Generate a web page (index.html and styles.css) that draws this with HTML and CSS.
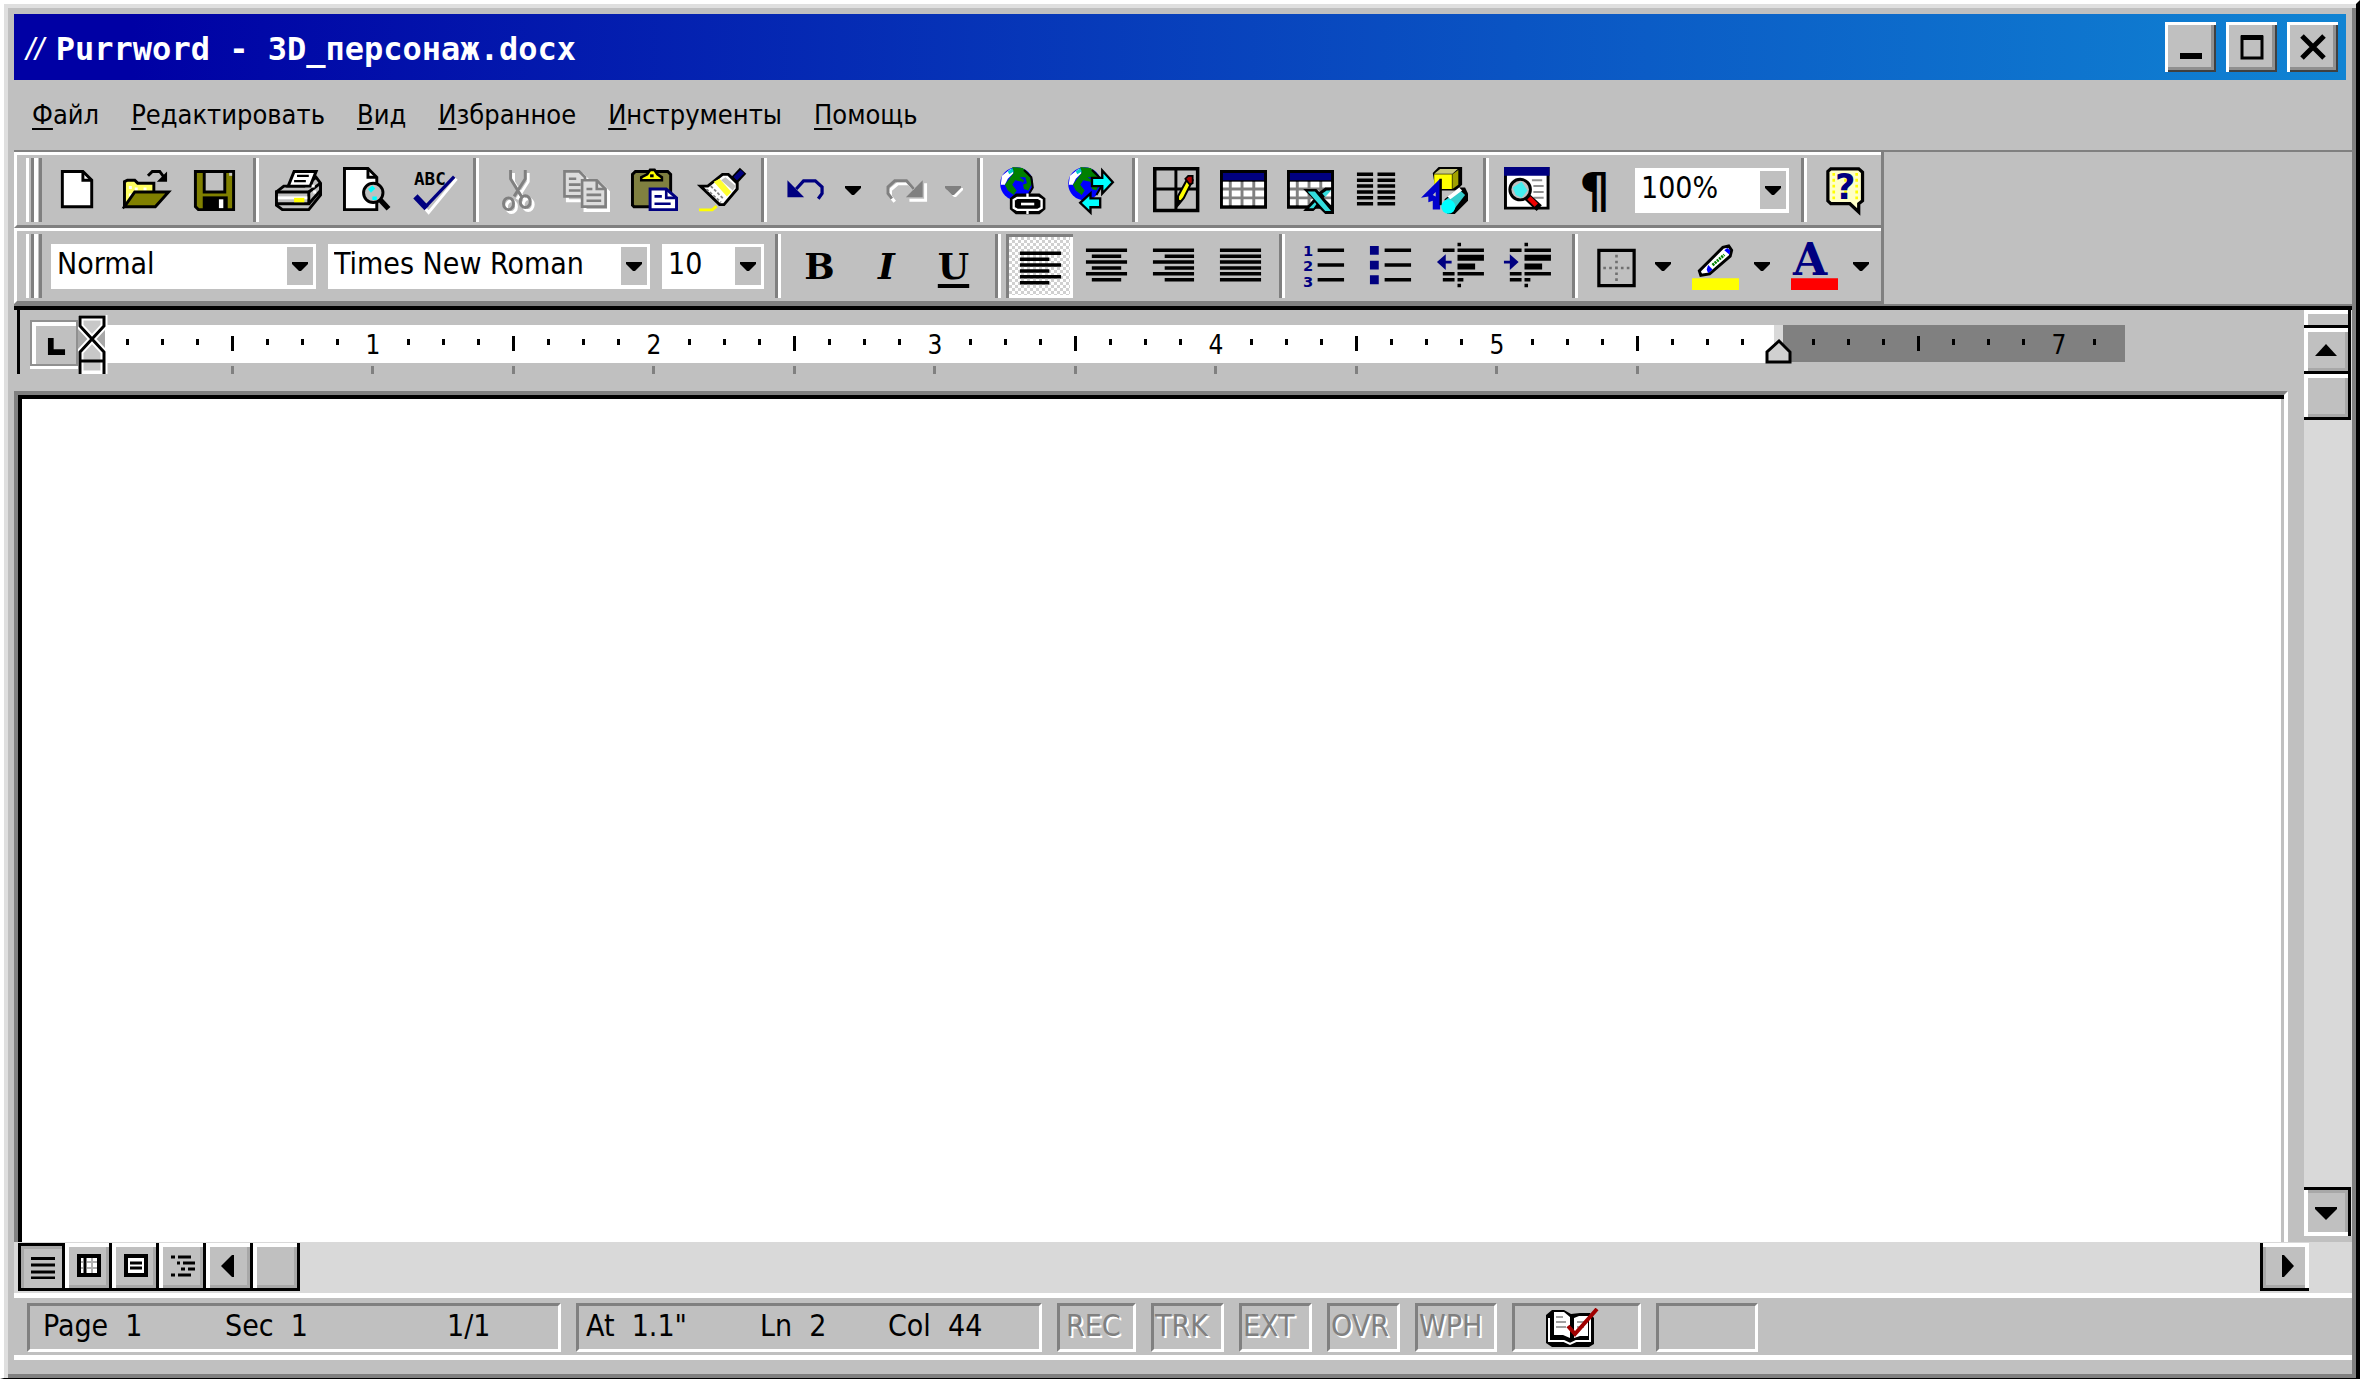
FILE: index.html
```html
<!DOCTYPE html>
<html lang="ru">
<head>
<meta charset="utf-8">
<meta name="viewport" content="width=device-width, initial-scale=1">
<title>Purrword - 3D_персонаж.docx</title>
<link rel="stylesheet" href="styles.css">
</head>
<body>
<svg class="defs" width="0" height="0" aria-hidden="true">
  <defs>
    <symbol id="caret" viewBox="0 0 16 9"><path d="M0 0H16V2L9 9H7L0 2Z"/></symbol>
    <symbol id="globe" viewBox="0 0 16 16">
      <circle cx="6" cy="5.7" r="5.6" fill="#00f"/>
      <path d="M1 3L4 .6L5 2L3 4L2 6L.6 6Z" fill="#fff"/>
      <path d="M4.500 0L8 .3L10 2L11.500 5L10 8L8.500 7.500L8 5L5.500 4.500L4.500 6L6 8L5 9.500L3 8L2 6L3.500 4L5 2Z" fill="#008000"/>
      <path d="M7 3.500L8.500 4.500L8 6L9.500 5.500L9 3.500Z" fill="#00f"/>
      <path d="M3 1.500L4.500 .3L5 1.500L3.500 2.500Z" fill="#0cc"/>
      <path d="M8.500 1L11 3.500L11.500 7L10 9.500" fill="none" stroke="#000" stroke-width=".7"/>
    </symbol>
    <symbol id="grid" viewBox="0 0 16 16">
      <path d="M0 1H16V14.200H0Z"/><path d="M1 2H15V4.500H1Z" fill="#000080"/>
      <path d="M1 5H15V13H1Z" fill="#808080"/>
      <path d="M1 5h2v2h-2zM4 5h3v2h-3zM8 5h3v2h-3zM12 5h3v2h-3zM1 8h2v2h-2zM4 8h3v2h-3zM8 8h3v2h-3zM12 8h3v2h-3zM1 11h2v2h-2zM4 11h3v2h-3zM8 11h3v2h-3zM12 11h3v2h-3z" fill="#fff"/>
    </symbol>
    <g id="inch">
      <path d="M34 24h3v6h-3zM69 24h3v6h-3zM104 24h3v6h-3zM139 21h3v15h-3zM174 24h3v6h-3zM209 24h3v6h-3zM244 24h3v6h-3z"/>
    </g>
  </defs>
</svg>

<div class="window">
  <header class="titlebar">
    <h1><i>//</i>Purrword - 3D_персонаж.docx</h1>
    <div class="captions">
      <button type="button" aria-label="Свернуть"><svg viewBox="0 0 26 26"><path d="M2 19H24V25H2Z"/></svg></button>
      <button type="button" aria-label="Развернуть"><svg viewBox="0 0 26 26"><path d="M3 3H23V24H3Z" fill="none" stroke="#000" stroke-width="3"/><path d="M2 1H24V6H2Z"/></svg></button>
      <button type="button" aria-label="Закрыть"><svg viewBox="0 0 26 26"><path d="M2 2L24 24M24 2L2 24" stroke="#000" stroke-width="5"/></svg></button>
    </div>
  </header>

  <nav class="menu">
    <a href="#file"><u>Ф</u>айл</a>
    <a href="#edit"><u>Р</u>едактировать</a>
    <a href="#view"><u>В</u>ид</a>
    <a href="#favorites"><u>И</u>збранное</a>
    <a href="#tools"><u>И</u>нструменты</a>
    <a href="#help"><u>П</u>омощь</a>
  </nav>

  <div class="dock">
    <div class="bars">
      <div class="bar" role="toolbar" aria-label="Standard">
        <span class="grip"></span>
        <div class="group">
          <button class="tool" type="button" aria-label="New"><svg viewBox="0 0 16 16"><path d="M2.500 1.500H9.500L12.500 4.500V13.500H2.500Z" fill="#fff" stroke="#000"/><path d="M9.500 1.500V4.500H12.500" fill="none" stroke="#000"/></svg></button>
          <button class="tool" type="button" aria-label="Open"><svg viewBox="0 0 16 16"><path d="M.5 13.500V5L1.500 4.500H4L5 5.500H10.500V9L6 10Z" fill="#ffff60" stroke="#000"/><path d="M2 6.500h1v1h-1zM4 7h1v1h-1zM2 9h1v1h-1zM7 7h1v1h-1z" fill="#fff"/><path d="M.5 13.500L4 8.500H15.500L11 13.500Z" fill="#808000" stroke="#000"/><path d="M8.500 3L10 1.500H12.500L14 3.500" fill="none" stroke="#000"/><path d="M11.500 5H15V1.500Z"/></svg></button>
          <button class="tool" type="button" aria-label="Save"><svg viewBox="0 0 16 16"><path d="M1.500 1.500H14.500V14.500H2.500L1.500 13.500Z" fill="#808000" stroke="#000"/><path d="M4.500 1.500H11.500V8.500H4.500Z" fill="#c0c0c0" stroke="#000"/><path d="M4 10H12.500V14.500H4Z"/><path d="M9.500 11H11V14H9.500Z" fill="#fff"/><path d="M13 2h1v1h-1z" fill="#ccc"/></svg></button>
        </div>
        <span class="sep"></span>
        <div class="group">
          <button class="tool" type="button" aria-label="Print"><svg viewBox="0 0 16 16"><path d="M.5 8.500L3 6.500H10L14 3.500L15.500 5.500V9.500L11.500 14.500H2.500L.5 13Z" fill="#c0c0c0" stroke="#000"/><path d="M6.500 1.500H14L12 6.500H4.500Z" fill="#fff" stroke="#000"/><path d="M7.500 3H11.500M6.500 4.800H10.500" stroke="#000" stroke-width=".8"/><path d="M.5 8.500H11.500V12.500H.5Z" fill="#c0c0c0" stroke="#000"/><path d="M1 10H11V11H1Z" fill="#fff"/><path d="M6.500 10.500H10V12H6.500Z" fill="#ff0"/><path d="M11.500 8.500L15.500 5.500M11.500 12.500L15.500 8" stroke="#000"/><path d="M13 8v1h1v-1zM12.500 6v1h1v-1z" fill="#fff"/></svg></button>
          <button class="tool" type="button" aria-label="Print preview"><svg viewBox="0 0 16 16"><path d="M.5 .5H8.500L11.500 3.500V14.500H.5Z" fill="#fff" stroke="#000"/><path d="M8.500 .5V3.500H11.500" fill="none" stroke="#000"/><circle cx="10.300" cy="8.800" r="3.300" fill="#c0c0c0" stroke="#000"/><path d="M8.500 7.500l1.500-1.200l1 1l-1.500 1.500zM10 10h1.500v1.200h-1.500z" fill="#0ff"/><path d="M12.800 11.300L15.500 14.200" stroke="#000" stroke-width="1.800"/></svg></button>
          <button class="tool" type="button" aria-label="Spelling"><svg viewBox="0 0 16 16"><text x="1" y="6" class="abc">ABC</text><path d="M2.500 11.500L6 15.500L15.500 4" fill="none" stroke="#fff"/><path d="M1.500 10L5.300 14" stroke="#000080" stroke-width="2"/><path d="M4.500 14L14.700 3.300" stroke="#000080" stroke-width="1.100"/></svg></button>
        </div>
        <span class="sep"></span>
        <div class="group">
          <button class="tool" type="button" aria-label="Cut" disabled><svg viewBox="0 0 16 16"><g fill="none" stroke="#fff" transform="translate(1 1)"><path d="M5.300 1V4L9 10M10.300 1V4L6.500 10"/><ellipse cx="4.600" cy="12.500" rx="1.700" ry="2"/><ellipse cx="10.300" cy="11.800" rx="1.700" ry="2"/></g><g fill="none" stroke="#808080"><path d="M5.300 1V4L9 10M10.300 1V4L6.500 10"/><ellipse cx="4.600" cy="12.500" rx="1.700" ry="2"/><ellipse cx="10.300" cy="11.800" rx="1.700" ry="2"/></g></svg></button>
          <button class="tool" type="button" aria-label="Copy" disabled><svg viewBox="0 0 16 16"><path d="M1.500 2.500H6.500L8.500 4.500V11.500H1.500ZM7.500 5.500H12.500L15.500 8.500V14.800H7.500Z" fill="none" stroke="#fff"/><path d="M.5 1.500H5.500L7.500 3.500V10H.5Z" fill="#ddd" stroke="#808080" stroke-width=".9"/><path d="M2 4H4.500M2 6H6M2 8H6" stroke="#808080" stroke-width=".9"/><path d="M6.500 4.500H11.500L14.500 7.500V13.500H6.500Z" fill="#ddd" stroke="#808080" stroke-width=".9"/><path d="M11.500 4.500V7.500H14.500M8 7.500H10M8 9.500H13M8 11.500H13" fill="none" stroke="#808080" stroke-width=".9"/></svg></button>
          <button class="tool" type="button" aria-label="Paste"><svg viewBox="0 0 16 16"><path d="M.5 2.500L1.500 1.500H12.500L13.500 2.500V13.500H1L.5 13Z" fill="#808040" stroke="#000"/><path d="M3.500 4.500V3.500L5.500 2.500L6.500 1H8L9 2.500L10.500 3.500V4.500Z" fill="#ff0" stroke="#000" stroke-width=".9"/><path d="M6.500 2.500h1.200v1h-1.200z"/><path d="M6.500 7.500H12L15.500 10.500V14.500H6.500Z" fill="#fff" stroke="#000080"/><path d="M12 7.500V10.500H15M8 10H10.500M8 12.500H13.500" fill="none" stroke="#000080" stroke-width=".9"/></svg></button>
          <button class="tool" type="button" aria-label="Format painter"><svg viewBox="0 0 16 16"><path d="M12 4.500L15 1.300" stroke="#000" stroke-width="3"/><path d="M12.300 4L14.800 1.500" stroke="#000080" stroke-width="1.700"/><path d="M.5 6.500H3L8 2.500H10L13 5.500V7.500L8.500 12.800H7Z" fill="#fff" stroke="#000"/><path d="M5 5L7 4L11 8.500L9.500 10Z" fill="#ffff30"/><path d="M9 3.500L12.500 6.500L11.500 8L7.500 4.500Z" fill="#c0c0c0"/><path d="M2.500 7.500L7.500 12M4 6.500L8.500 11" stroke="#808080" stroke-width=".6" stroke-dasharray="1 .6"/><path d="M0 14.600H4.500L6 13.300" stroke="#ff0" fill="none"/></svg></button>
        </div>
        <span class="sep"></span>
        <div class="group">
          <button class="tool" type="button" aria-label="Undo"><svg viewBox="0 0 16 16"><path d="M1.500 4.500V10.300H7.200Z" fill="#000080"/><path d="M4.500 7.500L7 4.700H11L13.300 6.800V9L12 10.800" fill="none" stroke="#000080" stroke-width="1.100"/></svg></button>
          <button class="drop" type="button" aria-label="Undo list"><svg><use href="#caret"/></svg></button>
          <button class="tool" type="button" aria-label="Redo" disabled><svg viewBox="0 0 16 16"><path d="M14.500 5.500V11.300H9" fill="none" stroke="#fff"/><path d="M11.300 8.300L8.800 5.700H5L2.500 7.800V10L4 11.800" fill="none" stroke="#fff" stroke-width="1.100"/><path d="M13.500 4.500V10.300H7.800Z" fill="#808080"/><path d="M10.500 7.500L8 4.700H4L1.700 6.800V9L3 10.800" fill="none" stroke="#808080"/></svg></button>
          <button class="drop off" type="button" aria-label="Redo list" disabled><svg><use href="#caret"/></svg></button>
        </div>
        <span class="sep"></span>
        <div class="group">
          <button class="tool" type="button" aria-label="Insert hyperlink"><svg viewBox="0 0 16 16"><use href="#globe"/><g fill="none"><path d="M4.500 11L6 9.800H13.500L15 11V14L13.500 15.300H6L4.500 14Z" stroke="#000" stroke-width="1.600"/><path d="M5 11.200L6.200 10.500H13.300L14.500 11.200V13.900L13.300 14.600H6.200L5 13.900Z" fill="#000" stroke="#fff" stroke-width=".8"/><path d="M7.500 12.600H12" stroke="#fff" stroke-width=".9"/><path d="M9.700 9V10.500M9.700 14.500V16" stroke="#fff" stroke-width=".8"/></g></svg></button>
          <button class="tool" type="button" aria-label="Web toolbar"><svg viewBox="0 0 16 16"><use href="#globe"/><path d="M8.500 3.700H12V1.200L15.600 5.200L12 9V6.500H8.500Z" fill="#0ff" stroke="#000" stroke-width=".8"/><path d="M11.300 10.700H8V9L4.500 12.200L8 15.500V13.700H11.300Z" fill="#0ff" stroke="#000" stroke-width=".8"/></svg></button>
        </div>
        <span class="sep wide"></span>
        <div class="group tight">
          <button class="tool" type="button" aria-label="Tables and borders"><svg viewBox="0 0 16 16"><path d="M.6 .6H15.200V14.800H.6Z" fill="#c0c0c0" stroke="#000" stroke-width="1.200"/><path d="M7.800 0V15M0 7.500H15" stroke="#000"/><path d="M8.500 13L8.500 10L12 3.500L13.500 4.500L10.500 10.500Z" fill="#ff0" stroke="#000" stroke-width=".7"/><path d="M11 4L12 3H13.500V5.500L12.500 6Z" fill="#a00" stroke="#000" stroke-width=".6"/><path d="M8.300 13.500V11L10 11.500Z"/></svg></button>
          <button class="tool" type="button" aria-label="Insert table"><svg viewBox="0 0 16 16"><use href="#grid"/></svg></button>
          <button class="tool" type="button" aria-label="Insert worksheet"><svg viewBox="0 0 16 16"><use href="#grid"/><path d="M5.500 7.500H10L11 8.500L13 7H15.500L12.500 10.500L16 14V16H13L10.500 13.500L9 15H5.500L9 11Z"/><path d="M7 8.300H9.500L15 15H13ZM12 9L13.500 8H15L13 10.200ZM7.500 14L9.500 12L10 12.700L9 14Z" fill="#3dd"/></svg></button>
          <button class="tool" type="button" aria-label="Columns"><svg viewBox="0 0 16 16"><path d="M1 2.500H6.500M8 2.500H14M1 4.500H6.500M8 4.500H14M1 6.500H6.500M8 6.500H14M1 8.500H6.500M8 8.500H14M1 10.500H6.500M8 10.500H14M1 12.500H6.500M8 12.500H14" stroke="#000" stroke-width="1.200"/></svg></button>
          <button class="tool" type="button" aria-label="Drawing"><svg viewBox="0 0 16 16"><path d="M4 2L6 0H14V6L12 8H5Z" fill="#000"/><path d="M4.500 2.500H10.500V7.500H4.500Z" fill="#ff0"/><path d="M4.500 2.300L6.500 .7H12.500L10.700 2.300Z" fill="#c8c880"/><path d="M10.700 2.500L12.700 1V6L10.700 7.500Z" fill="#a0a000"/><path d="M0 10.500L6.500 4V14.500H4V11.500L2.500 12V10Z" fill="#00c"/><path d="M6.700 4V13" stroke="#000" stroke-width=".8"/><path d="M4 9.500L5 8.500V10Z" fill="#c0c0c0"/><path d="M8 11L13 7H15L16 9V11.500L11.500 16H9Z" fill="#000"/><path d="M8 11.500L13 7.700L15 9.500L11.500 14Z" fill="#3cc"/><path d="M9 10L13 7L14 8L10 11Z" fill="#fff"/><circle cx="9.300" cy="13.500" r="2.400" fill="#0ff"/></svg></button>
        </div>
        <span class="sep"></span>
        <div class="group tight">
          <button class="tool" type="button" aria-label="Document map"><svg viewBox="0 0 16 16"><path d="M.5 .5H15V14H.5Z" fill="#fff" stroke="#000"/><path d="M0 0H15.500V3H0Z" fill="#000080"/><path d="M9.500 4.500H13M10 6.500H13.500M10 8.500H13.500M10 10.500H13.500" stroke="#909090" stroke-width=".7"/><circle cx="5.500" cy="7.700" r="3.500" fill="#c0c0c0" stroke="#000"/><path d="M3 7L6 5L8 8L6 10.500L4 9.500Z" fill="#4ee"/><path d="M8 10.300L12 14" stroke="#000" stroke-width="2.600"/><path d="M8.500 10.500L11 13" stroke="#e00" stroke-width="1.600"/></svg></button>
          <button class="tool pilcrow" type="button" aria-label="Show formatting">¶</button>
        </div>
        <span class="combo zoom"><select aria-label="Zoom"><option>100%</option></select><span class="knob"><svg><use href="#caret"/></svg></span></span>
        <span class="sep"></span>
        <div class="group tight">
          <button class="tool" type="button" aria-label="Help"><svg viewBox="0 0 16 16"><path d="M2 1.500L3 .6H12.500L13.800 1.800V11.500L12.500 12.500V15.300L9.500 12.500H3L2 11.500Z" fill="#ffffc8" stroke="#000" stroke-width="1.100"/><path d="M4 2v9.500M11.800 2v9.500M8 2v9.500" stroke="#ff0" stroke-dasharray="1 1" stroke-width=".9"/><text x="7.900" y="11" class="query">?</text></svg></button>
        </div>
      </div>

      <div class="bar" role="toolbar" aria-label="Formatting">
        <span class="grip"></span>
        <div class="combos">
          <span class="combo style"><select aria-label="Style"><option>Normal</option></select><span class="knob"><svg><use href="#caret"/></svg></span></span>
          <span class="combo font"><select aria-label="Font"><option>Times New Roman</option></select><span class="knob"><svg><use href="#caret"/></svg></span></span>
          <span class="combo size"><select aria-label="Font size"><option>10</option></select><span class="knob"><svg><use href="#caret"/></svg></span></span>
        </div>
        <span class="sep"></span>
        <div class="group tight">
          <button class="tool letter" type="button" aria-label="Bold">B</button>
          <button class="tool letter italic" type="button" aria-label="Italic">I</button>
          <button class="tool letter under" type="button" aria-label="Underline">U</button>
        </div>
        <span class="sep wide"></span>
        <div class="group tight">
          <button class="tool pressed" type="button" aria-label="Align left" aria-pressed="true"><svg viewBox="0 0 16 16"><path d="M1 2.500H15M1 4.500H11M1 6.500H15M1 8.500H11M1 10.500H15M1 12.500H11" stroke="#000" stroke-width="1.200"/></svg></button>
          <button class="tool" type="button" aria-label="Center"><svg viewBox="0 0 16 16"><path d="M1 2.500H15M3 4.500H13M1 6.500H15M3 8.500H13M1 10.500H15M3 12.500H13" stroke="#000" stroke-width="1.200"/></svg></button>
          <button class="tool" type="button" aria-label="Align right"><svg viewBox="0 0 16 16"><path d="M1 2.500H15M5 4.500H15M1 6.500H15M5 8.500H15M1 10.500H15M5 12.500H15" stroke="#000" stroke-width="1.200"/></svg></button>
          <button class="tool" type="button" aria-label="Justify"><svg viewBox="0 0 16 16"><path d="M1 2.500H15M1 4.500H15M1 6.500H15M1 8.500H15M1 10.500H15M1 12.500H15" stroke="#000" stroke-width="1.200"/></svg></button>
        </div>
        <span class="sep"></span>
        <div class="group tight">
          <button class="tool" type="button" aria-label="Numbering"><svg viewBox="0 0 16 16"><g class="nums"><text x="1" y="4.500">1</text><text x="1" y="9.700">2</text><text x="1" y="15">3</text></g><path d="M6 2.500H15M6 7.500H15M6 12.500H15" stroke="#000" stroke-width="1.200"/></svg></button>
          <button class="tool" type="button" aria-label="Bullets"><svg viewBox="0 0 16 16"><path d="M1 1h3v3h-3zM1 6h3v3h-3zM1 11h3v3h-3z" fill="#000080"/><path d="M6 2.500H15M6 7.500H15M6 12.500H15" stroke="#000" stroke-width="1.200"/></svg></button>
          <button class="tool" type="button" aria-label="Decrease indent"><svg viewBox="0 0 16 16"><g transform="translate(1 0)"><path d="M0 6.500L3 3.800V6H5V7H3V9.200Z" fill="#000080"/><path d="M2 2.500H6M7 2.500H16M2 10.500H6M7 10.500H16M2 12.500H6M7 12.500H9M7 .5H8.200M7 14.500H8.200" stroke="#000" stroke-width="1.200"/><path d="M7 5H16M7 8H13" stroke="#000" stroke-width="2"/></g></svg></button>
          <button class="tool" type="button" aria-label="Increase indent"><svg viewBox="0 0 16 16"><g transform="translate(1 0)"><path d="M5 6.500L2 3.800V6H0V7H2V9.200Z" fill="#000080"/><path d="M2 2.500H6M7 2.500H16M2 10.500H6M7 10.500H16M2 12.500H6M7 12.500H9M7 .5H8.200M7 14.500H8.200" stroke="#000" stroke-width="1.200"/><path d="M7 5H16M7 8H13" stroke="#000" stroke-width="2"/></g></svg></button>
        </div>
        <span class="sep roomy"></span>
        <div class="group tight">
          <button class="tool" type="button" aria-label="Borders"><svg viewBox="0 0 16 16"><path d="M2 2.500H14V14.500H2Z" fill="none" stroke="#000" stroke-width="1.100"/><path d="M8 4V14M3.500 8.500H13.500" stroke="#707070" stroke-width=".9" stroke-dasharray=".9 1.100"/></svg></button>
          <button class="drop" type="button" aria-label="Border list"><svg><use href="#caret"/></svg></button>
          <button class="tool" type="button" aria-label="Highlight"><svg viewBox="0 0 16 16"><path d="M0 12H16V16H0Z" fill="#ff0"/><path d="M2.500 9.500L10.500 1.500L12.500 1L13.500 2.500L13 4.500L6 10.500L3 11Z" fill="#fff" stroke="#000"/><path d="M11 2.500L12.800 4L13 2.500L12 1.700ZM5.500 7.500L7 9L5.500 10.300L5 9Z" fill="#00f"/><path d="M7 7.500L11 4" stroke="#008000" stroke-dasharray=".7 .3"/></svg></button>
          <button class="drop" type="button" aria-label="Highlight colors"><svg><use href="#caret"/></svg></button>
          <button class="tool" type="button" aria-label="Font color"><svg viewBox="0 0 16 16"><path d="M0 12H16V16H0Z" fill="#f00"/><text x="6.500" y="11" class="big-a">A</text></svg></button>
          <button class="drop" type="button" aria-label="Font colors"><svg><use href="#caret"/></svg></button>
        </div>
      </div>
    </div>
  </div>

  <main class="work">
    <div class="pane">
      <div class="ruler">
        <button class="tab" type="button" aria-label="Tab type"><svg viewBox="0 0 20 20"><path d="M1 1H7V13H19V19H1Z"/></svg></button>
        <svg class="scale" width="2048" height="60" viewBox="0 0 2048 60" role="img" aria-label="Ruler">
          <path d="M0 10H27V48H0Z" fill="#a8a8a8"/><path d="M27 10H1696V48H27Z" fill="#fff"/>
          <path d="M1696 10H1705V48H1696Z" fill="#d9d9d9"/><path d="M1705 10H2047V47H1705Z" fill="#808080"/>
          <use href="#inch" x="14"/><use href="#inch" x="295"/><use href="#inch" x="576"/><use href="#inch" x="857"/><use href="#inch" x="1138"/><use href="#inch" x="1419"/><use href="#inch" x="1700"/>
          <path d="M2015 24h3v6h-3z"/>
          <g class="digits"><text x="295" y="39">1</text><text x="576" y="39">2</text><text x="857" y="39">3</text><text x="1138" y="39">4</text><text x="1419" y="39">5</text><text x="1981" y="39">7</text></g>
          <path d="M153 51h3v8h-3zM293 51h3v8h-3zM434 51h3v8h-3zM574 51h3v8h-3zM715 51h3v8h-3zM855 51h3v8h-3zM996 51h3v8h-3zM1136 51h3v8h-3zM1277 51h3v8h-3zM1417 51h3v8h-3zM1558 51h3v8h-3z" fill="#808080"/>
          <path d="M2 2H26V11L14 24L26 37V59H2V37L14 24L2 11Z" fill="#c8c8c8" stroke="#fff" stroke-width="7"/>
          <path d="M2 60V37L14 24L2 11V2H26V11L14 24L26 37V60M2 46H26" fill="none" stroke="#000" stroke-width="3"/>
          <path d="M1701 26L1712 37V47H1689V37Z" fill="#d0d0d0" stroke="#000" stroke-width="3"/>
        </svg>
      </div>
      <textarea class="page" aria-label="Document" spellcheck="false"></textarea>
    </div>
    <div class="vscroll">
      <button class="split" type="button" aria-label="Split"></button>
      <button class="bevel" type="button" aria-label="Scroll up"><svg width="22" height="12" viewBox="0 0 22 12"><path d="M11 0L22 12H0Z"/></svg></button>
      <div class="bevel thumb"></div>
      <button class="bevel down" type="button" aria-label="Scroll down"><svg width="22" height="13" viewBox="0 0 22 13"><path d="M0 0H22V2L11 13L0 2Z"/></svg></button>
    </div>
    <div class="hscroll">
      <button class="bevel sunk" type="button" aria-label="Normal view"><svg viewBox="0 0 24 24"><path d="M0 3.500H24M0 10H24M0 17H24M0 23H24" stroke="#000" stroke-width="3"/></svg></button>
      <button class="bevel" type="button" aria-label="Online layout"><svg viewBox="0 0 24 24"><path d="M2 2H22V21H2Z" fill="#fff" stroke="#000" stroke-width="4"/><path d="M8 2V21" stroke="#000" stroke-width="3"/><path d="M10 8H20M10 14H20M15 4V19M4 8H6M4 14H6" stroke="#b0b0b0" stroke-width="2"/></svg></button>
      <button class="bevel" type="button" aria-label="Page layout"><svg viewBox="0 0 24 24"><path d="M2 2H22V21H2Z" fill="#fff" stroke="#000" stroke-width="4"/><path d="M6 9H18M6 14H18" stroke="#000" stroke-width="3"/></svg></button>
      <button class="bevel" type="button" aria-label="Outline"><svg viewBox="0 0 24 24"><path d="M0 3H4M7 3H20M6 9H9M12 9H24M10 15H14M17 15H24M0 21H4M7 21H20" stroke="#000" stroke-width="3"/></svg></button>
      <button class="bevel" type="button" aria-label="Scroll left"><svg viewBox="0 0 24 24"><path d="M16 1V23H14L3 12L14 1Z"/></svg></button>
      <div class="bevel"></div>
      <button class="bevel right" type="button" aria-label="Scroll right"><svg viewBox="0 0 24 24"><path d="M8 1V23H10L20 12L10 1Z"/></svg></button>
    </div>
  </main>

  <footer class="status">
    <div class="cell page-info"><span>Page&nbsp; 1</span><span>Sec&nbsp; 1</span><span>1/1</span></div>
    <div class="cell caret-info"><span>At&nbsp; 1.1"</span><span>Ln&nbsp; 2</span><span>Col&nbsp; 44</span></div>
    <div class="cell flag first">REC</div>
    <div class="cell flag">TRK</div>
    <div class="cell flag">EXT</div>
    <div class="cell flag">OVR</div>
    <div class="cell flag last">WPH</div>
    <div class="cell book"><svg width="56" height="40" viewBox="0 0 56 40"><path d="M2 7L8 2H20L27 6L36 5H46L50 10V36L45 39H8L2 35Z"/><path d="M5 10V33H10L20 33L26 36L32 33H46V10" fill="none" stroke="#fff" stroke-width="2"/><path d="M10 4H20L26 9V30L19 27H10ZM30 10L35 8H44V28H36L30 30Z" fill="#fff"/><path d="M12 9H19M12 14H22M12 19H22M33 14H40M33 19H40" stroke="#a0a0a0" stroke-width="2"/><path d="M24 18L31 26L53 1" fill="none" stroke="#a00000" stroke-width="4"/></svg></div>
    <div class="cell blank"></div>
  </footer>
</div>
</body>
</html>
```
FILE: styles.css
```css
* { box-sizing: border-box; }

:root {
  --face: #c0c0c0;
  --shade: #808080;
  --track: #d9d9d9;
  --ui: "DejaVu Sans Condensed", "DejaVu Sans", sans-serif;
}

body {
  margin: 0;
  background: #000;
  color: #000;
  font-family: var(--ui);
}

button {
  margin: 0;
  padding: 0;
  border: 0;
  border-radius: 0;
  background: none;
  color: #000;
  font: inherit;
}

svg { display: block; }
.defs { position: absolute; }

/* Window frame */
.window {
  display: flex;
  flex-direction: column;
  min-height: 100vh;
  padding: 10px 4px 5px 10px;
  border: solid #fff;
  border-width: 4px 4px 1px 4px;
  border-right-color: #000;
  border-bottom-color: #000;
  background: var(--face);
  box-shadow: inset 4px 4px #dfdfdf, inset -4px -4px var(--shade);
}

.titlebar {
  display: flex;
  justify-content: space-between;
  align-items: center;
  height: 66px;
  margin-right: 6px;
  padding: 0 8px 0 12px;
  background: linear-gradient(90deg, #0000a4 5%, #0b5cc6 70%, #1084d3);
}

h1 {
  display: flex;
  align-items: center;
  gap: 12px;
  margin: 0;
  padding-top: 4px;
  color: #fff;
  font: bold 32px/40px "DejaVu Sans Mono", monospace;
  white-space: pre;
}

h1 i {
  font: italic 32px/40px "Liberation Sans", sans-serif;
}

.captions { display: flex; gap: 10px; padding-bottom: 1px; }

.captions button {
  display: grid;
  place-items: center;
  width: 51px;
  height: 50px;
  background: var(--face);
  box-shadow: inset 3px 3px #fff, inset -2px -2px #404040, inset -5px -5px #909090;
}

.captions svg { width: 26px; height: 26px; }

.menu {
  display: flex;
  align-items: center;
  gap: 32px;
  height: 70px;
  padding: 0 18px;
  font-size: 27px;
  line-height: 36px;
}

.menu a { color: #000; text-decoration: none; }
.menu u { text-decoration-thickness: 2px; text-underline-offset: 4px; }

/* Toolbars */
.dock {
  display: flex;
  border: solid var(--shade);
  border-width: 2px 0;
}

.bars { border-right: 3px solid var(--shade); }

.bar {
  display: flex;
  align-items: center;
  height: 76px;
  padding-right: 1px;
  border: solid #fff;
  border-width: 3px 0 3px 3px;
  border-bottom-color: var(--shade);
}

.grip {
  width: 18px;
  height: 64px;
  margin: 0 0 0 9px;
  background: linear-gradient(90deg, #fff 3px, var(--face) 3px 5px, var(--shade) 5px 8px, #fff 8px 12px, var(--face) 12px 13px, var(--shade) 13px 16px, var(--face) 16px);
}

.group { display: flex; align-items: center; }

.sep {
  width: 6px;
  height: 64px;
  margin: 0 5px;
  background: linear-gradient(90deg, var(--shade) 3px, #fff 3px);
}

.sep.wide { margin-left: 8px; }
.sep.roomy { margin-left: 14px; }

.tool {
  display: grid;
  place-items: center;
  width: 68px;
  height: 64px;
}

.tight .tool { width: 67px; }
.tool svg { width: 47px; height: 47px; overflow: visible; }

.drop {
  display: flex;
  align-items: center;
  width: 32px;
  height: 64px;
  padding-left: 5px;
}

.drop svg, .knob svg { width: 16px; height: 9px; }
.drop.off svg { fill: var(--shade); filter: drop-shadow(2px 2px 0 #fff); }

.tool.pressed {
  padding: 6px 0 0 2px;
  background: repeating-conic-gradient(#fff 0 25%, #d0d0d0 0 50%) 0 0 / 6px 6px;
  box-shadow: inset 3px 3px var(--shade), inset -3px -3px #fff;
}

.tool.letter { font: bold 36px/40px "DejaVu Serif", serif; }
.tool.italic { font-style: italic; }
.tool.under { text-decoration: underline 4px; text-underline-offset: 5px; }
.tool.pilcrow { font: bold 48px/48px "DejaVu Sans", sans-serif; }

.abc { font: bold 6px "DejaVu Sans Mono", monospace; }
.query { fill: #000080; font: bold 12px "DejaVu Sans", sans-serif; text-anchor: middle; }
.nums { fill: #000080; font: bold 5px "DejaVu Sans", sans-serif; }
.big-a { fill: #000080; font: bold 15px "DejaVu Serif", serif; text-anchor: middle; }

.combos { display: flex; gap: 12px; padding: 0 6px 0 7px; }
.combo { display: grid; height: 45px; background: #fff; }

.combo select {
  grid-area: 1 / 1;
  width: 100%;
  height: 45px;
  padding: 0 6px 4px;
  border: 0;
  border-radius: 0;
  appearance: none;
  background: #fff;
  color: #000;
  font: 30px/40px var(--ui);
}

.knob {
  grid-area: 1 / 1;
  justify-self: end;
  align-self: center;
  display: grid;
  place-items: center;
  width: 26px;
  height: 38px;
  margin-right: 3px;
  background: var(--face);
  pointer-events: none;
}

.combo.style { width: 265px; }
.combo.font { width: 322px; }
.combo.size { width: 102px; }
.combo.zoom { width: 154px; margin: 0 7px; }

/* Editing area */
.work {
  flex: 1;
  display: grid;
  grid-template: 1fr 51px / 1fr 48px;
  column-gap: 16px;
  border-top: 4px solid #000;
}

.pane { display: flex; flex-direction: column; }

.ruler {
  display: flex;
  align-items: flex-start;
  height: 64px;
  margin: 0 0 17px 3px;
  padding: 5px 0 0 10px;
  border-left: 3px solid #000;
  overflow: hidden;
}

.tab {
  display: grid;
  place-items: center;
  flex: none;
  width: 48px;
  height: 46px;
  margin-top: 5px;
  border: 2px solid #909090;
  box-shadow: inset 4px 4px #fff, 0 3px #fff;
}

.tab svg { width: 19px; height: 19px; margin: 6px 0 0 4px; }
.scale { flex: none; }
.digits { font: 26px var(--ui); text-anchor: middle; }

.page {
  flex: 1;
  display: block;
  width: 100%;
  padding: 12px;
  border: solid #fff;
  border-width: 4px 4px 0 4px;
  border-top-color: var(--shade);
  border-left-color: var(--shade);
  border-radius: 0;
  outline: 0;
  background: #fff;
  box-shadow: inset 4px 4px #000, inset -3px 0 var(--face);
  font: 30px/40px "Liberation Serif", serif;
  resize: none;
}

.bevel {
  display: grid;
  place-items: center;
  width: 47px;
  height: 48px;
  border: solid #000;
  border-width: 0 3px 3px 0;
  background: var(--face);
  box-shadow: inset 4px 4px #fff, inset -3px -3px #a8a8a8;
}

.vscroll {
  display: flex;
  flex-direction: column;
  padding-bottom: 6px;
  background: linear-gradient(var(--track), var(--track)) no-repeat 0 0 / 100% calc(100% - 6px);
}

.vscroll .bevel { height: 46px; }

.split {
  width: 47px;
  height: 18px;
  border: solid #000;
  border-width: 0 3px 3px 0;
  background: var(--face);
  box-shadow: inset 4px 4px #fff;
}

.vscroll .down {
  height: 49px;
  margin-top: auto;
  border-width: 3px 3px 0 0;
  box-shadow: inset 4px -4px #fff, inset -3px 3px #a8a8a8;
}

.hscroll {
  grid-column: 1 / -1;
  display: flex;
  align-items: flex-start;
  padding: 1px 43px 0 4px;
  background: var(--track);
}

.hscroll svg { width: 24px; height: 24px; }
.hscroll .bevel { padding-left: 3px; }
.hscroll .sunk { border-width: 3px; box-shadow: inset 3px 3px #a8a8a8; }

.hscroll .right {
  width: 49px;
  margin-left: auto;
  padding: 0;
  border-width: 0 0 3px 3px;
  box-shadow: inset -4px 4px #fff, inset 3px -3px #a8a8a8;
}

/* Status bar */
.status {
  display: flex;
  gap: 15px;
  margin-bottom: 13px;
  padding: 5px 13px 3px;
  border: solid #fff;
  border-width: 5px 0;
  font-size: 30px;
  line-height: 40px;
}

.cell {
  height: 49px;
  border: 3px solid #fff;
  border-top-color: var(--shade);
  border-left-color: var(--shade);
  white-space: pre;
}

.page-info, .caret-info { display: grid; }
.page-info { width: 534px; padding-left: 13px; grid-template-columns: 182px 222px 1fr; }
.caret-info { width: 466px; padding-left: 7px; grid-template-columns: 174px 128px 1fr; }

.flag {
  width: 73px;
  padding-left: 1px;
  color: var(--shade);
  text-shadow: 2px 2px #fff;
}

.flag.first { width: 79px; padding-left: 6px; }
.flag.last { width: 82px; }
.book { display: grid; place-items: center; width: 129px; padding-right: 10px; }
.blank { width: 102px; }
```
